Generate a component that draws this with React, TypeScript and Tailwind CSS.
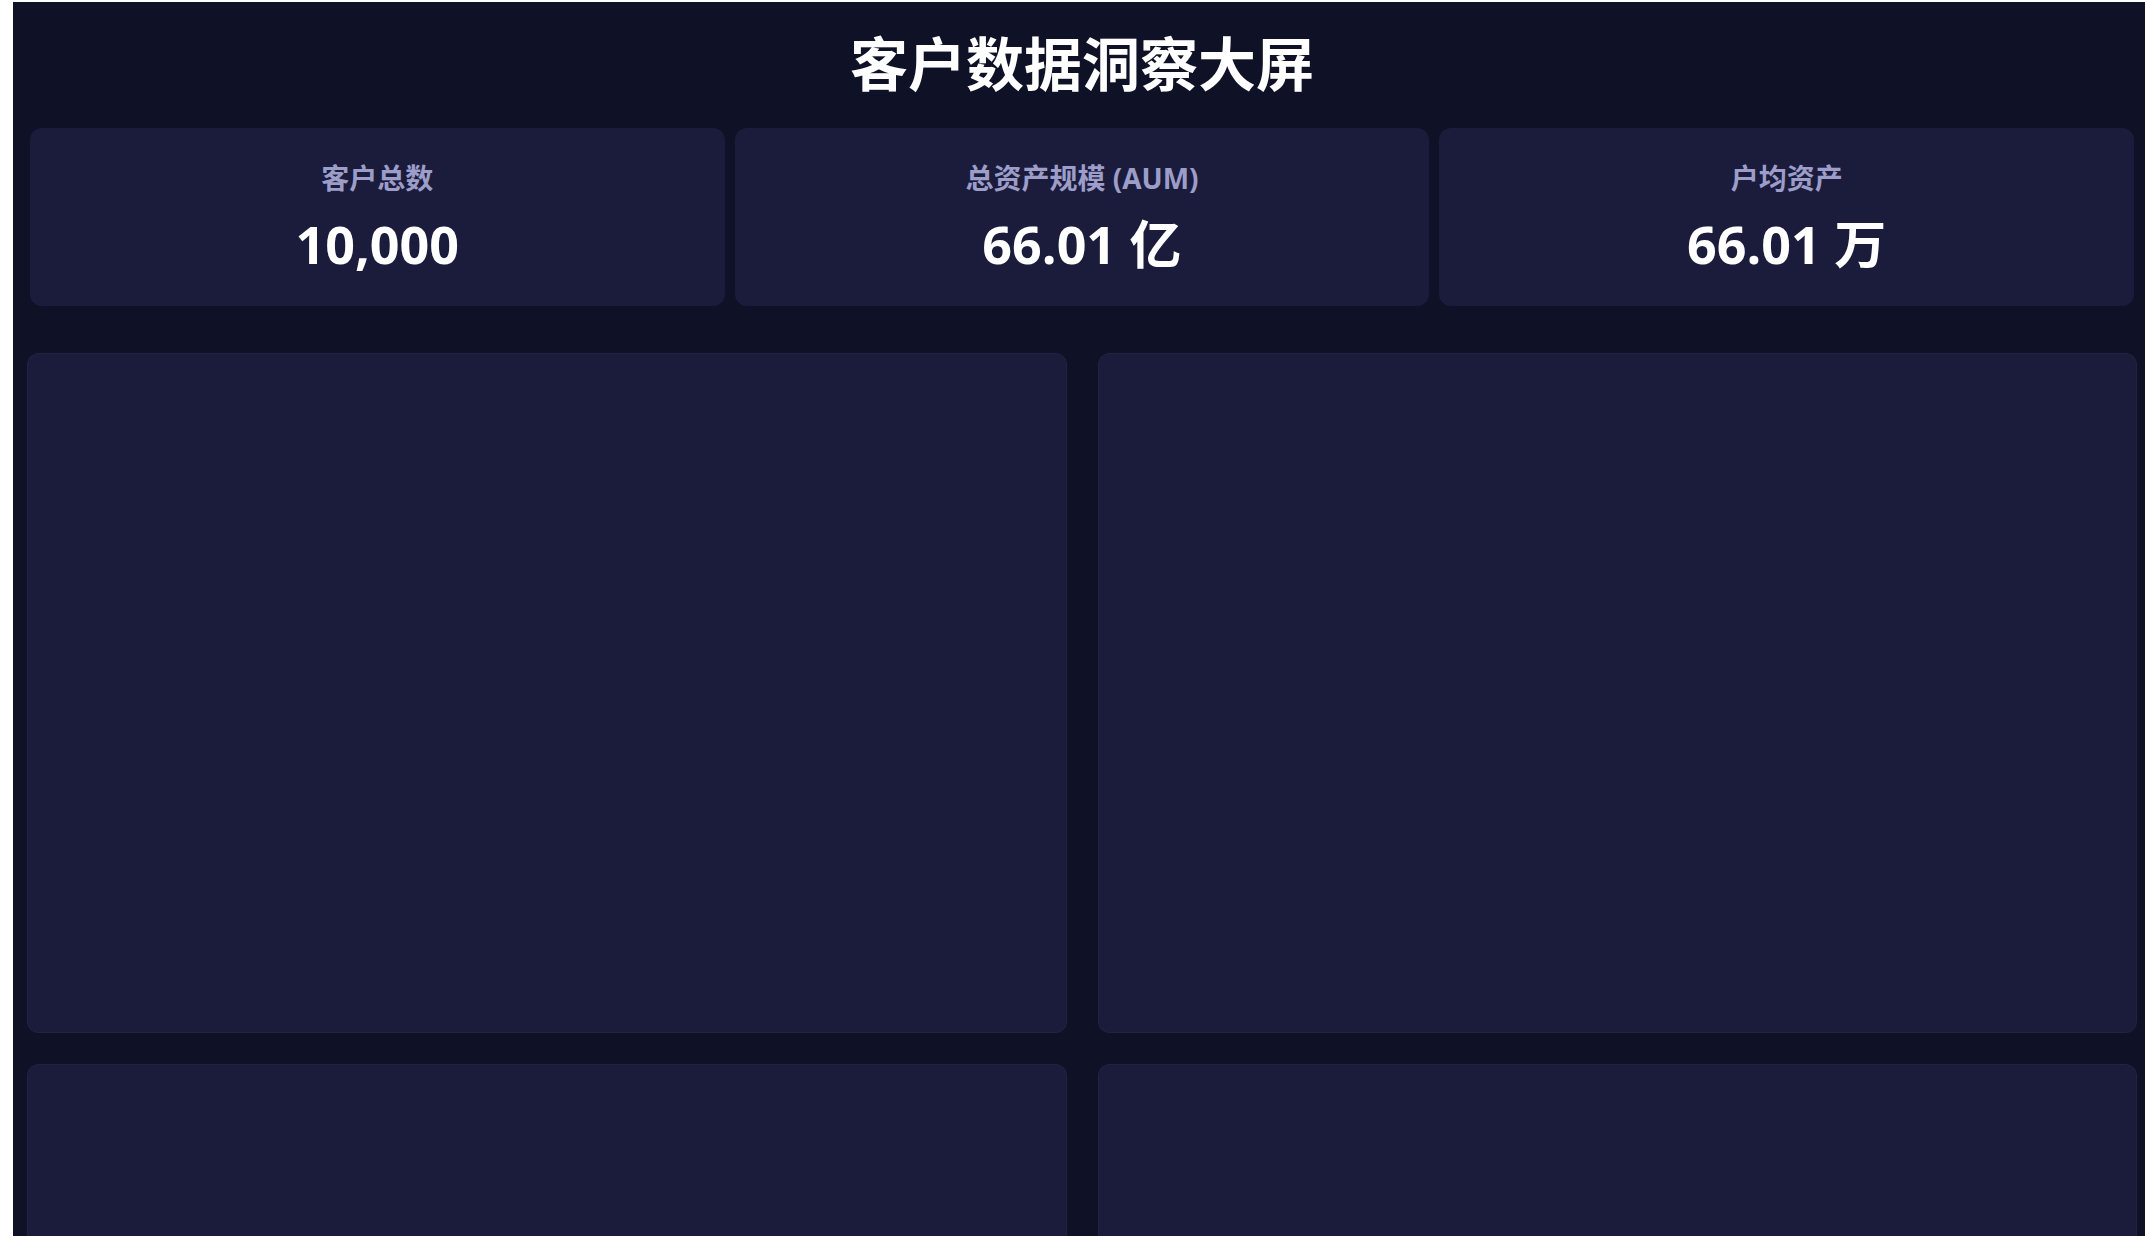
const kpis = [
    { label: "客户总数", value: "10,000" },
    { label: "总资产规模 (AUM)", value: "66.01 亿" },
    { label: "户均资产", value: "66.01 万" },
]

function KpiCard({ label, value }: { label: string; value: string }) {
    return (
        <div className="h-[178px] flex flex-col items-center pt-[30px] rounded-xl bg-[#1b1c3b]">
            <div className="text-[28px] leading-[40px] font-bold text-[#9c9ec9]">{label}</div>
            <div className="mt-[16px] text-[52px] leading-[60px] font-bold text-white">{value}</div>
        </div>
    )
}

function Panel() {
    return <div className="h-[680px] rounded-xl bg-[#1b1c3b] border border-white/[0.03]"></div>
}

export default function App() {
    return (
        <div className="w-[2145px] h-[1242px] overflow-hidden bg-white" style={{ fontFamily: '"Open Sans", "Noto Sans CJK SC", sans-serif' }}>
            <div className="ml-[13px] mt-[2px] w-[2138px] h-[1234px] overflow-hidden bg-[#0f1226]">
                <div className="pt-[22px] mb-[30px] text-center">
                    <h1 className="text-[58px] leading-[74px] font-bold text-white" style={{ fontFamily: '"Noto Sans CJK SC", sans-serif' }}>客户数据洞察大屏</h1>
                </div>

                <div className="grid grid-cols-3 gap-[10px] px-[17px]">
                    {kpis.map((k) => (
                        <KpiCard key={k.label} label={k.label} value={k.value} />
                    ))}
                </div>

                <div className="grid grid-cols-2 gap-[31px] px-[14px] mt-[47px]">
                    <Panel />
                    <Panel />
                    <Panel />
                    <Panel />
                </div>
            </div>
        </div>
    )
}
